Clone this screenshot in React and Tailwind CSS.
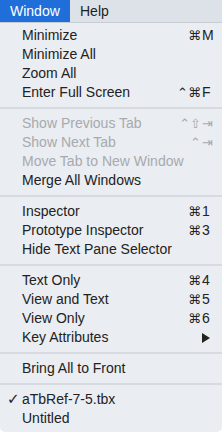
import React from "react";

const rows = [
  [
    { label: "Minimize", mods: "⌘", key: "M" },
    { label: "Minimize All" },
    { label: "Zoom All" },
    { label: "Enter Full Screen", mods: "⌃⌘", key: "F" },
  ],
  [
    { label: "Show Previous Tab", mods: "⌃⇧", key: "⇥", disabled: true },
    { label: "Show Next Tab", mods: "⌃", key: "⇥", disabled: true },
    { label: "Move Tab to New Window", disabled: true },
    { label: "Merge All Windows" },
  ],
  [
    { label: "Inspector", mods: "⌘", key: "1" },
    { label: "Prototype Inspector", mods: "⌘", key: "3" },
    { label: "Hide Text Pane Selector" },
  ],
  [
    { label: "Text Only", mods: "⌘", key: "4" },
    { label: "View and Text", mods: "⌘", key: "5" },
    { label: "View Only", mods: "⌘", key: "6" },
    { label: "Key Attributes", arrow: true },
  ],
  [{ label: "Bring All to Front" }],
  [{ label: "aTbRef-7-5.tbx", checked: true }, { label: "Untitled" }],
];

function Row({ item }) {
  const color = item.disabled ? "text-[#a7aaae]" : "text-[#222222]";
  return (
    <div className={`relative flex h-[19px] items-center pl-[22px] pr-[6px] text-[14px] leading-[19px] ${color}`}>
      {item.checked && (
        <span className="absolute left-[7px] top-0 font-['DejaVu_Sans'] text-[15px] leading-[19px]">✓</span>
      )}
      <span className="flex-1 whitespace-nowrap">{item.label}</span>
      {(item.mods || item.key) && (
        <span className="flex items-center">
          <span className="font-['DejaVu_Sans'] text-[13px] text-right">{item.mods}</span>
          <span className="w-[15px] pl-[1px] text-left">
            {item.key === "⇥" ? (
              <span className="font-['DejaVu_Sans'] text-[13px]">⇥</span>
            ) : (
              item.key
            )}
          </span>
        </span>
      )}
      {item.arrow && (
        <span className="w-[15px] pl-[1px]">
          <svg width="9" height="10" viewBox="0 0 9 10">
            <path d="M0 0 L8 5 L0 10 Z" fill="#222222" />
          </svg>
        </span>
      )}
    </div>
  );
}

export default function App() {
  return (
    <div className="h-[432px] w-[222px] bg-white font-['Liberation_Sans',Arial,sans-serif]">
      <div className="flex h-[22px] bg-[#dde2e9] text-[14px]">
        <div className="flex w-[70px] items-center bg-[#1f6ed9] pl-[10px] text-white">Window</div>
        <div className="flex items-center pl-[10px] text-[#1e1e1e]">Help</div>
      </div>
      <div className="rounded-b-[5px] border-t border-[#c8cdd4] bg-[#eaedf1] pb-[4px] pt-[3px]">
        {rows.map((group, gi) => (
          <React.Fragment key={gi}>
            {gi > 0 && (
              <div className="flex h-[12px] items-center">
                <div className="h-[2px] w-full bg-[#d7dbe0]" />
              </div>
            )}
            {group.map((item) => (
              <Row key={item.label} item={item} />
            ))}
          </React.Fragment>
        ))}
      </div>
    </div>
  );
}
